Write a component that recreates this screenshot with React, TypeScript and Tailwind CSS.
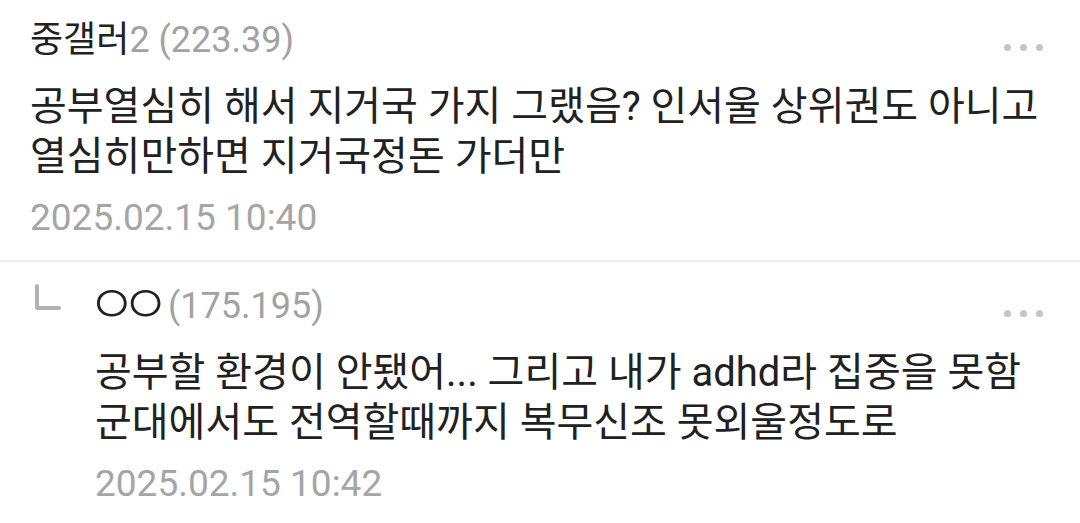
import React from "react";

const Dots = () => (
  <div className="flex items-center gap-[9px] pt-[29px]">
    <span className="block w-[7px] h-[7px] rounded-full bg-[#c6c6c6]" />
    <span className="block w-[7px] h-[7px] rounded-full bg-[#c6c6c6]" />
    <span className="block w-[7px] h-[7px] rounded-full bg-[#c6c6c6]" />
  </div>
);

export default function App() {
  return (
    <div className="w-[1080px] h-[523px] bg-white overflow-hidden font-['Roboto','Noto_Sans_CJK_KR',sans-serif] text-[#212121]">
      {/* Comment */}
      <div className="pl-[30px] pr-[37px] pt-[15px] pb-[17px]">
        <div className="flex items-start justify-between h-[50px]">
          <div className="text-[36px] leading-[50px] whitespace-nowrap">
            <span className="text-[36px]">중갤러</span>
            <span className="text-[#a2a2a2]">2 (223.39)</span>
          </div>
          <Dots />
        </div>
        <div className="mt-[17px] text-[40px] leading-[50px] whitespace-nowrap">
          <div>공부열심히 해서 지거국 가지 그랬음? 인서울 상위권도 아니고</div>
          <div>열심히만하면 지거국정돈 가더만</div>
        </div>
        <div className="mt-[11px] text-[37px] leading-[50px] text-[#a5a5a5]">2025.02.15 10:40</div>
      </div>
      <div className="h-[2px] bg-[#f0f0f0]" />
      {/* Reply */}
      <div className="flex pl-[33px] pr-[37px] pt-[19px]">
        <div className="w-[62px] shrink-0 pt-[2px]">
          <svg width="30" height="30" viewBox="0 0 30 30">
            <path d="M4 3 V25 H26" fill="none" stroke="#b3b3b3" strokeWidth="4" strokeLinecap="round" strokeLinejoin="round" />
          </svg>
        </div>
        <div className="flex-1">
          <div className="flex items-start justify-between h-[50px]">
            <div className="flex items-start h-[50px] whitespace-nowrap">
              <span className="block w-[81px] h-[50px] -ml-[8px] text-[54px] leading-[50px] font-light tracking-[-16px]">ㅇㅇ</span>
              <span className="block text-[36px] leading-[50px] text-[#a2a2a2]">(175.195)</span>
            </div>
            <Dots />
          </div>
          <div className="mt-[17px] text-[40px] leading-[50px] whitespace-nowrap">
            <div>공부할 환경이 안됐어... 그리고 내가 adhd라 집중을 못함</div>
            <div>군대에서도 전역할때까지 복무신조 못외울정도로</div>
          </div>
          <div className="mt-[11px] text-[37px] leading-[50px] text-[#a5a5a5]">2025.02.15 10:42</div>
        </div>
      </div>
    </div>
  );
}
